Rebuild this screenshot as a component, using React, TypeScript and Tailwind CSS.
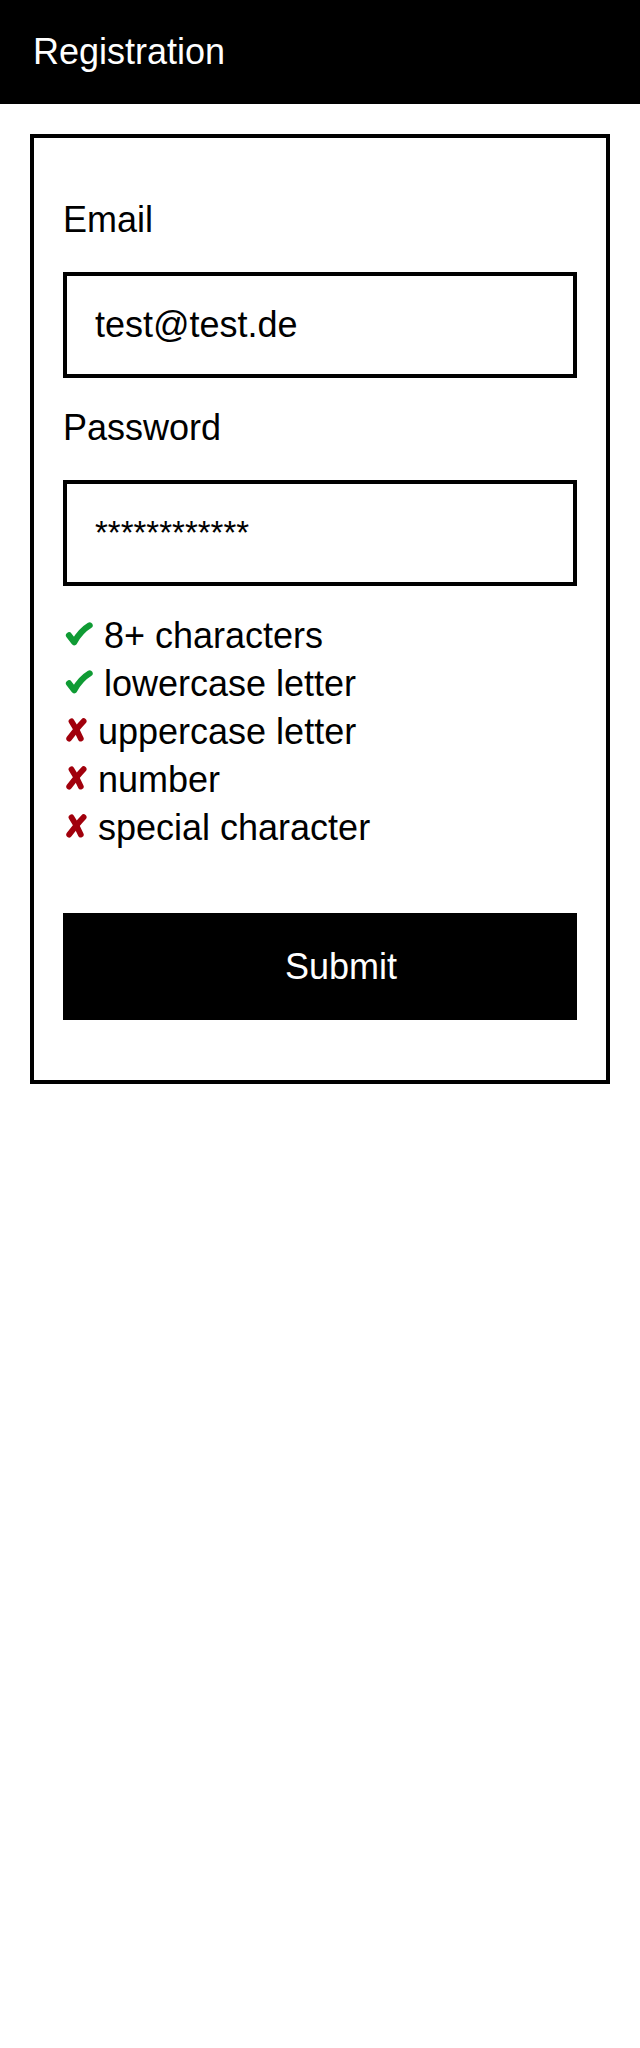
const rules = [
  { ok: true, label: "8+ characters" },
  { ok: true, label: "lowercase letter" },
  { ok: false, label: "uppercase letter" },
  { ok: false, label: "number" },
  { ok: false, label: "special character" },
];

function CheckIcon() {
  return (
    <svg width="28" height="24" viewBox="0 0 28 24" className="ml-[2px] mr-[11px] mb-[4px] shrink-0">
      <path
        d="M4 13.4 L9.2 20.2 C13.4 12.6 18.6 7 24.6 3.4"
        stroke="#0f9b34"
        strokeWidth="6.2"
        strokeLinecap="round"
        strokeLinejoin="round"
        fill="none"
      />
    </svg>
  );
}

function CrossIcon() {
  return (
    <svg width="22" height="24" viewBox="0 0 22 24" className="ml-[2px] mr-[11px] mb-[4px] shrink-0">
      <path d="M6.5 3.4 C10 8.6 13 14 15.8 20.6" stroke="#a1000c" strokeWidth="5.8" strokeLinecap="round" fill="none" />
      <path d="M18.6 3.2 C13.6 8.4 9 14.2 4.2 20.6" stroke="#a1000c" strokeWidth="5.8" strokeLinecap="round" fill="none" />
    </svg>
  );
}

function Field({ label, value, first }: { label: string; value: string; first?: boolean }) {
  return (
    <div className={first ? "" : "mt-[30px]"}>
      <label className="block text-[36px] leading-[40px] text-black">{label}</label>
      <div className="mt-[32px] flex h-[106px] items-center border-4 border-black px-[28px]">
        {value === "password" ? (
          <span className="text-[33px] leading-[40px] text-black">************</span>
        ) : (
          <span className="text-[36px] leading-[40px] text-black">{value}</span>
        )}
      </div>
    </div>
  );
}

export default function App() {
  return (
    <div className="min-h-[2048px] bg-white font-['Liberation_Sans',Arial,sans-serif]">
      <header className="flex h-[104px] items-center bg-black px-[33px] text-[36px] text-white">
        Registration
      </header>

      <main className="px-[30px] pt-[30px]">
        <form className="border-4 border-black px-[29px] pt-[62px] pb-[60px]">
          <Field label="Email" value="test@test.de" first />
          <Field label="Password" value="password" />

          <ul className="mt-[26px]">
            {rules.map((rule) => (
              <li key={rule.label} className="flex items-center text-[36px] leading-[48px] text-black">
                {rule.ok ? <CheckIcon /> : <CrossIcon />}
                <span>{rule.label}</span>
              </li>
            ))}
          </ul>

          <button
            type="button"
            className="mt-[61px] flex h-[107px] w-full items-center justify-center bg-black pl-[42px] text-[36px] text-white"
          >
            Submit
          </button>
        </form>
      </main>
    </div>
  );
}
